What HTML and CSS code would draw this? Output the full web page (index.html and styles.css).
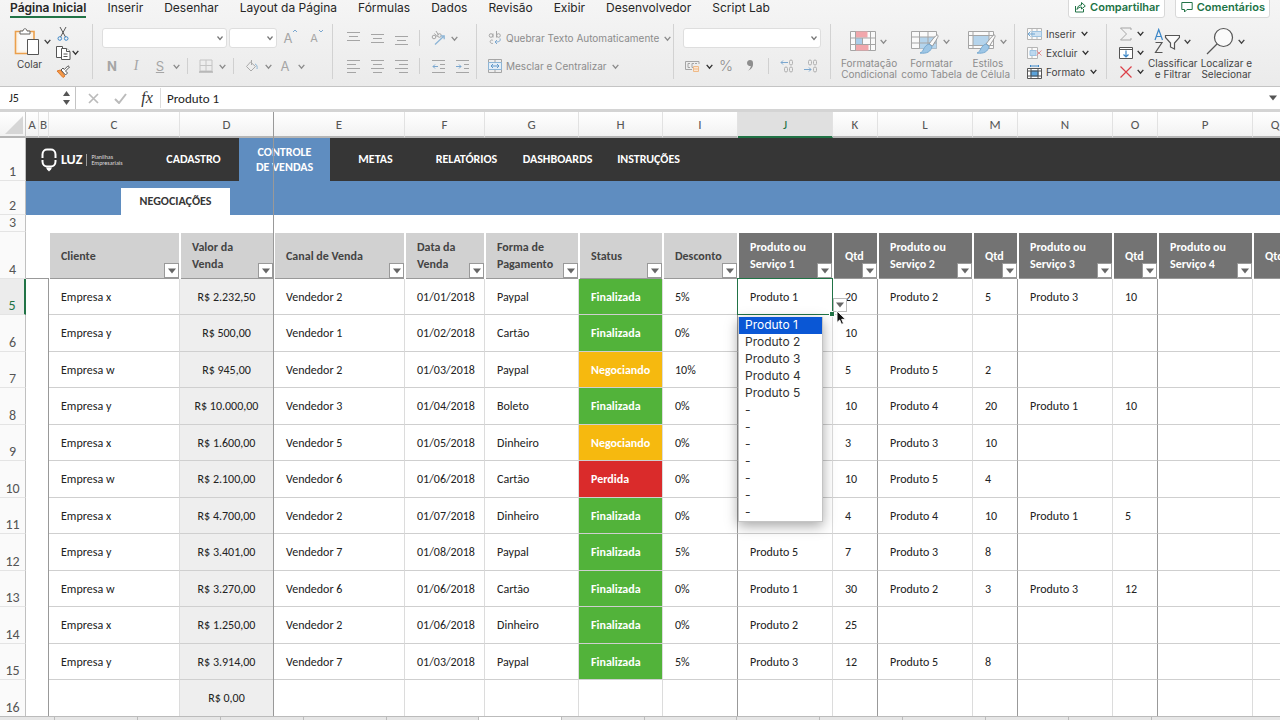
FILE: index.html
```html
<!DOCTYPE html>
<html lang="pt-BR">
<head>
<meta charset="utf-8">
<title>Controle de Vendas</title>
<link rel="stylesheet" href="styles.css">
</head>
<body>
<svg class="defs" aria-hidden="true">
  <symbol id="chev" viewBox="0 0 8 8"><path d="M1.500 2.500 4 5.500 6.500 2.500" fill="none" stroke="currentColor" stroke-width="1.200"/></symbol>
  <symbol id="tri" viewBox="0 0 8 8"><path d="M0 1.500h8L4 6.500z" fill="currentColor"/></symbol>
</svg>

<header class="ribbon">
  <div class="tabbar">
    <nav class="tabs">
      <a href="#" class="tab active">Página Inicial</a>
      <a href="#" class="tab">Inserir</a>
      <a href="#" class="tab">Desenhar</a>
      <a href="#" class="tab">Layout da Página</a>
      <a href="#" class="tab">Fórmulas</a>
      <a href="#" class="tab">Dados</a>
      <a href="#" class="tab">Revisão</a>
      <a href="#" class="tab">Exibir</a>
      <a href="#" class="tab">Desenvolvedor</a>
      <a href="#" class="tab">Script Lab</a>
    </nav>
    <div class="share">
      <button class="share-btn"><svg width="12" height="12" viewBox="0 0 12 12" fill="none" stroke="currentColor"><path d="M1.500 5v6h8V8M3 8.500C3.500 5.500 5 4 7.500 4V1.500L11.300 5 7.500 8V6C5.500 6 4 6.800 3 8.500z"/></svg>Compartilhar</button>
      <button class="share-btn"><svg width="12" height="12" viewBox="0 0 12 12" fill="none" stroke="currentColor"><path d="M.8 1.500h10.400v7H6L3.500 11V8.500H.8z"/></svg>Comentários</button>
    </div>
  </div>

  <div class="groups">
    <section class="group g-clip">
      <button class="big">
        <span class="big-icon"><svg width="26" height="28" viewBox="0 0 26 28" fill="none"><path d="M1.500 3.500h18.500v22H1.500z" fill="#fbf3e8" stroke="#eba04c" stroke-width="1.600"/><path d="M4.500 6.500h12v16h-12z" fill="#fafafa"/><path d="M6 6V3h3c0-3 4-3 4 0h3v3z" fill="#fff" stroke="#666"/><path d="M13.500 11.500h11v15h-11z" fill="#fff" stroke="#555"/></svg><svg class="chev"><use href="#chev"/></svg></span>
        <span class="cap">Colar</span>
      </button>
      <div class="stack3 dark">
        <button class="tool"><svg width="14" height="14" viewBox="0 0 14 14" fill="none" stroke="#555"><path d="M4 0l5.500 10M10 0L4.500 10"/><circle cx="3.800" cy="11.500" r="1.800" stroke="#3c87c8"/><circle cx="10.200" cy="11.500" r="1.800" stroke="#3c87c8"/></svg></button>
        <button class="tool"><svg width="15" height="14" viewBox="0 0 15 14" fill="#fff" stroke="#555"><path d="M.5 .5h6v11h-6z"/><path d="M5.500 2.500h5l3.500 3v8H5.500z"/><path d="M10.500 2.500v3H14M7.500 8h4M7.500 10.500h4"/></svg><svg class="chev"><use href="#chev"/></svg></button>
        <button class="tool"><svg width="15" height="14" viewBox="0 0 15 14" fill="none"><path d="M1 6l6 6.500L9 11 4.500 5z" fill="#f39a4a" stroke="#e0782a"/><path d="M5 5l4.500 5 2-2L9.500 6 13.500 2 12 .8 8.300 4.500 7 3z" fill="#fff" stroke="#555"/></svg></button>
      </div>
    </section>

    <section class="group g-font">
      <div class="row">
        <select class="box w-font" aria-label="Fonte"></select>
        <select class="box w-size" aria-label="Tamanho da fonte"></select>
        <button class="tool b"><span class="glyph">A</span><svg class="sup" viewBox="0 0 6 6"><path d="M1 4l2-2 2 2" fill="none" stroke="#7ba7cf"/></svg></button>
        <button class="tool b"><span class="glyph small">A</span><svg class="sup" viewBox="0 0 6 6"><path d="M1 2l2 2 2-2" fill="none" stroke="#7ba7cf"/></svg></button>
      </div>
      <div class="row tight">
        <button class="tool b"><b class="glyph">N</b></button>
        <button class="tool b"><i class="glyph serif">I</i></button>
        <button class="tool b"><u class="glyph">S</u></button>
        <svg class="chev"><use href="#chev"/></svg><span class="sep"></span>
        <button class="tool b"><svg width="14" height="14" viewBox="0 0 14 14" fill="none" stroke="#c4c4c4"><path d="M1 1h12v11H1zM7 1v11M1 6.500h12"/><path d="M0 13h14" stroke="#999"/></svg></button>
        <svg class="chev"><use href="#chev"/></svg><span class="sep"></span>
        <button class="tool b"><svg width="14" height="12" viewBox="0 0 14 12" fill="none" stroke="#aaa"><path d="M5.500 2l5 4.500L6 11 1.500 6.500zM6.500 0v5"/><path d="M10 4c2 .5 2.500 3 2 5" stroke="#8fb4d3"/></svg></button>
        <svg class="chev"><use href="#chev"/></svg>
        <button class="tool b"><span class="glyph">A</span></button>
        <svg class="chev"><use href="#chev"/></svg>
      </div>
    </section>

    <section class="group g-align">
      <div class="row tight">
        <button class="tool b"><svg width="13" height="14" viewBox="0 0 13 14" stroke="#a5a5a5"><path d="M0 1.500h13M2 5.500h9M0 9.500h13"/></svg></button>
        <button class="tool b"><svg width="13" height="14" viewBox="0 0 13 14" stroke="#a5a5a5"><path d="M0 3.500h13M2 7.500h9M0 11.500h13"/></svg></button>
        <button class="tool b"><svg width="13" height="14" viewBox="0 0 13 14" stroke="#a5a5a5"><path d="M0 5.500h13M2 9.500h9M0 13.500h13"/></svg></button>
        <span class="sep"></span>
        <button class="tool b"><svg width="15" height="15" viewBox="0 0 15 15" fill="none" stroke="#a5a5a5"><circle cx="3" cy="6" r="1.800"/><path d="M3.500 2.500l3 3.500"/><circle cx="8.500" cy="4.500" r="1.800"/><path d="M5 0l2.500 4"/><path d="M4 13.500L13 5M9.500 4.800l3.700 0v3.500" stroke="#8db5d6" stroke-width="1.300"/></svg></button>
        <svg class="chev"><use href="#chev"/></svg>
      </div>
      <div class="row tight">
        <button class="tool b"><svg width="13" height="13" viewBox="0 0 13 13" stroke="#a5a5a5"><path d="M0 .5h13M0 4.500h9M0 8.500h13M0 12.500h9"/></svg></button>
        <button class="tool b"><svg width="13" height="13" viewBox="0 0 13 13" stroke="#a5a5a5"><path d="M0 .5h13M2 4.500h9M0 8.500h13M2 12.500h9"/></svg></button>
        <button class="tool b"><svg width="13" height="13" viewBox="0 0 13 13" stroke="#a5a5a5"><path d="M0 .5h13M4 4.500h9M0 8.500h13M4 12.500h9"/></svg></button>
        <span class="sep"></span>
        <button class="tool b"><svg width="13" height="13" viewBox="0 0 13 13" fill="none" stroke="#a5a5a5"><path d="M0 .5h13M8 4.500h5M8 8.500h5M0 12.500h13"/><path d="M6 6.500H1M3 4.500l-2 2 2 2" stroke="#7ba7cf"/></svg></button>
        <button class="tool b"><svg width="13" height="13" viewBox="0 0 13 13" fill="none" stroke="#a5a5a5"><path d="M0 .5h13M8 4.500h5M8 8.500h5M0 12.500h13"/><path d="M0 6.500h5M3 4.500l2 2-2 2" stroke="#7ba7cf"/></svg></button>
      </div>
    </section>

    <section class="group g-wrap">
      <div class="row"><button class="tool text"><svg width="14" height="14" viewBox="0 0 14 14" fill="none" stroke="#a5a5a5"><circle cx="3" cy="4.500" r="1.800"/><path d="M5 2.500v4M8.500 0v6.500M4.800 9.300c-3-1.500-4 3.500 0 3.200"/><circle cx="10.500" cy="4.500" r="1.800"/><path d="M12 7.500c1 3-1.500 3.500-5 3.500M9 9l-2 2 2 2" stroke="#7ba7cf"/></svg>Quebrar Texto Automaticamente<svg class="chev"><use href="#chev"/></svg></button></div>
      <div class="row"><button class="tool text"><svg width="14" height="14" viewBox="0 0 14 14" fill="none" stroke="#a5a5a5"><path d="M.5 .5h13v13H.5zM7 .5v3M7 10.500v3"/><path d="M.5 3.500h13v7H.5z" fill="#e4eef7" stroke="#8db5d6"/><path d="M3 7h8M5 5L3 7l2 2M9 5l2 2-2 2" stroke="#5f97c9"/></svg>Mesclar e Centralizar<svg class="chev"><use href="#chev"/></svg></button></div>
    </section>

    <section class="group g-number">
      <div class="row"><select class="box w-num" aria-label="Formato de número"></select></div>
      <div class="row tight">
        <button class="tool b"><svg width="16" height="13" viewBox="0 0 16 13" fill="none" stroke="#a5a5a5"><path d="M14 4V1.500H.5v8H7M5 3.500H3v4h2M9 3.500H7v4h1M10 3.500h2"/><path d="M8.500 6.500h5v5h-5zM8.500 9h5" fill="#fbe6d3" stroke="#efba88"/></svg></button>
        <svg class="chev strong"><use href="#chev"/></svg>
        <button class="tool b"><span class="glyph pct">%</span></button>
        <button class="tool b"><svg width="8" height="12" viewBox="0 0 8 12"><path d="M4 0a3 3 0 1 0 .8 5.900C4.500 8 3.500 9.500 1.500 11c4-1.500 6-4.500 5.500-8A3 3 0 0 0 4 0z" fill="#8e8e8e"/></svg></button>
        <span class="sep"></span>
        <button class="tool b"><svg width="14" height="14" viewBox="0 0 14 14" fill="none" stroke="#b0b0b0"><rect x="9.500" y="1" width="3" height="5" rx="1.500"/><rect x="4.500" y="8" width="3" height="5" rx="1.500"/><rect x="9.500" y="8" width="3" height="5" rx="1.500"/><path d="M8 3.500H1M3 1.500l-2 2 2 2" stroke="#7ba7cf"/></svg></button>
        <button class="tool b"><svg width="14" height="14" viewBox="0 0 14 14" fill="none" stroke="#b0b0b0"><rect x="4.500" y="1" width="3" height="5" rx="1.500"/><rect x="9.500" y="1" width="3" height="5" rx="1.500"/><rect x="9.500" y="8" width="3" height="5" rx="1.500"/><path d="M0 10.500h7M5 8.500l2 2-2 2" stroke="#7ba7cf"/></svg></button>
      </div>
    </section>

    <section class="group g-style">
      <button class="big dim">
        <span class="big-icon"><svg width="26" height="26" viewBox="0 0 26 26"><path d="M.5 3.500h25v19H.5z" fill="#fafafa" stroke="#a5a5a5"/><path d="M5.500 3.500h12v6h-12zM5.500 16.500h13v6h-13z" fill="#f1a7ac"/><path d="M5.500 10h7v6h-7z" fill="#a9cdea"/><path d="M5.500 3.500v19M.5 10h25M.5 16.500h25M12.500 10v6.500M20.500 3.500v19" fill="none" stroke="#a5a5a5"/></svg><svg class="chev"><use href="#chev"/></svg></span>
        <span>Formatação<br>Condicional</span>
      </button>
      <button class="big dim">
        <span class="big-icon"><svg width="28" height="26" viewBox="0 0 28 26"><path d="M.5 3.500h25v17H.5z" fill="#fafafa" stroke="#a5a5a5"/><path d="M8.500 9h17v11.500h-17z" fill="#b5d4ec"/><path d="M.5 9h25M.5 15h25M8.500 3.500v17M17 3.500v17" fill="none" stroke="#a5a5a5"/><path d="M26.500 7c1.500 1 .5 2-5 11l-3.500-2C23 9.500 25.500 6.500 26.500 7z" fill="#fafafa" stroke="#999"/><path d="M18 16l3 2.500c-1 5-5 7.500-12 6.500 4-1 3-7 9-9z" fill="#9dc6e6" stroke="#77a9d0"/></svg><svg class="chev"><use href="#chev"/></svg></span>
        <span>Formatar<br>como Tabela</span>
      </button>
      <button class="big dim">
        <span class="big-icon"><svg width="28" height="26" viewBox="0 0 28 26"><path d="M.5 3.500h25v17H.5z" fill="#fafafa" stroke="#a5a5a5"/><path d="M5 7.500h16v10H5z" fill="#b5d4ec"/><path d="M.5 7.500h25M.5 17.500h25M5 3.500v17M21 3.500v17" fill="none" stroke="#a5a5a5"/><path d="M26.500 7c1.500 1 .5 2-5 11l-3.500-2C23 9.500 25.500 6.500 26.500 7z" fill="#fafafa" stroke="#999"/><path d="M18 16l3 2.500c-1 5-5 7.500-12 6.500 4-1 3-7 9-9z" fill="#9dc6e6" stroke="#77a9d0"/></svg><svg class="chev"><use href="#chev"/></svg></span>
        <span>Estilos<br>de Célula</span>
      </button>
    </section>

    <section class="group g-cells">
      <div class="stack3 dark">
        <button class="tool text"><svg width="15" height="12" viewBox="0 0 15 12" fill="#fafafa" stroke="#b5b5b5"><path d="M.5 .5h14v11H.5zM5 .5v11M10 .5v11"/><path d="M5 3.500h9.500v5H5z" fill="#cfe2f2" stroke="#9dc2e0"/><path d="M8 6H1M3.500 3.500L1 6l2.500 2.500" fill="none" stroke="#6fa5d2"/></svg>Inserir<svg class="chev"><use href="#chev"/></svg></button>
        <button class="tool text"><svg width="15" height="12" viewBox="0 0 15 12" fill="#fafafa" stroke="#b5b5b5"><path d="M.5 .5h10v11H.5zM5 .5v11"/><path d="M3 3.500h6v5H3z" fill="#bcd7ee" stroke="#9dc2e0"/><path d="M9.500 3.500l5 5M14.500 3.500l-5 5" stroke="#e58d92"/></svg>Excluir<svg class="chev"><use href="#chev"/></svg></button>
        <button class="tool text"><svg width="15" height="14" viewBox="0 0 15 14" fill="#fff" stroke="#555"><path d="M.5 3.500h14v10H.5z"/><path d="M4 6h7v5H4z" fill="#5ba3db" stroke="#3c87c8"/><path d="M4 3v11M11 3v11M.5 6h14M.5 11h14" fill="none"/><path d="M3 1h9M3.500 0v2M11.500 0v2" stroke="#3c87c8"/></svg>Formato<svg class="chev"><use href="#chev"/></svg></button>
      </div>
    </section>

    <section class="group g-edit">
      <div class="stack3 dark">
        <button class="tool"><svg width="14" height="14" viewBox="0 0 14 14" fill="none" stroke="#a5a5a5"><path d="M12 3V1H1.500l6 6-6 6H12v-2"/></svg><svg class="chev"><use href="#chev"/></svg></button>
        <button class="tool"><svg width="14" height="12" viewBox="0 0 14 12" fill="#fff" stroke="#555"><path d="M.5 .5h13v11H.5zM.5 2.500h13"/><path d="M7 3.500V10M4.500 7.500L7 10l2.500-2.500" fill="none" stroke="#3c87c8" stroke-width="1.200"/></svg><svg class="chev"><use href="#chev"/></svg></button>
        <button class="tool"><svg width="14" height="12" viewBox="0 0 14 12" fill="none" stroke="#dc3f48" stroke-width="1.200"><path d="M1.500 .5l11 11M12.500 .5l-11 11"/></svg><svg class="chev"><use href="#chev"/></svg></button>
      </div>
      <button class="big">
        <span class="big-icon"><svg width="26" height="26" viewBox="0 0 26 26" fill="none" stroke="#555" stroke-width="1.200"><path d="M1 12L4.700 1.500 8.500 12M2.300 8.500h5" stroke="#3c87c8"/><path d="M1.500 14.500h6.500L1.500 24.500H8.500"/><path d="M11.500 7.500h14v2l-5 5.500v6l-4-2v-4l-5-5.500z" fill="#fafafa"/></svg><svg class="chev"><use href="#chev"/></svg></span>
        <span>Classificar<br>e Filtrar</span>
      </button>
      <button class="big">
        <span class="big-icon"><svg width="28" height="28" viewBox="0 0 28 28" fill="none" stroke="#555" stroke-width="1.200"><circle cx="17.500" cy="10.500" r="9" fill="#fafafa"/><path d="M11 17L1 27"/></svg><svg class="chev"><use href="#chev"/></svg></span>
        <span>Localizar e<br>Selecionar</span>
      </button>
    </section>
  </div>
</header>

<div class="formula">
  <div class="namebox">
    <input value="J5" aria-label="Caixa de nome">
    <span class="spin"><svg width="7" height="5" viewBox="0 0 7 5"><path d="M0 5h7L3.500 0z" fill="#555"/></svg><svg width="7" height="5" viewBox="0 0 7 5"><path d="M0 0h7L3.500 5z" fill="#555"/></svg></span>
  </div>
  <button class="fbtn" aria-label="Cancelar"><svg width="11" height="11" viewBox="0 0 11 11" stroke="#bbb" stroke-width="1.700"><path d="M1 1l9 9M10 1l-9 9"/></svg></button>
  <button class="fbtn" aria-label="Confirmar"><svg width="13" height="11" viewBox="0 0 13 11" fill="none" stroke="#bbb" stroke-width="2"><path d="M1 6l4 4 7-9"/></svg></button>
  <button class="fbtn fx">fx</button>
  <input class="finput" value="Produto 1" aria-label="Barra de fórmulas">
  <button class="fexp" aria-label="Expandir"><svg width="8" height="8"><use href="#tri"/></svg></button>
</div>

<main class="sheet">
<table class="grid">
<colgroup><col class="c-row"><col class="c-a"><col class="c-b"><col class="c-c"><col class="c-d"><col class="c-e"><col class="c-f"><col class="c-g"><col class="c-h"><col class="c-i"><col class="c-p"><col class="c-q"><col class="c-p"><col class="c-q"><col class="c-p"><col class="c-q"><col class="c-p"><col class="c-q"></colgroup>
<thead>
<tr class="letters"><th class="corner"><svg width="18" height="18" viewBox="0 0 18 18"><path d="M18 0v18H0z" fill="#d6d6d6"/></svg></th><th>A</th><th>B</th><th>C</th><th>D</th><th>E</th><th>F</th><th>G</th><th>H</th><th>I</th><th class="on">J</th><th>K</th><th>L</th><th>M</th><th>N</th><th>O</th><th>P</th><th>Q</th></tr>
</thead>
<tbody>
<tr class="r1"><th>1</th><td colspan="17" class="menu-cell">
  <nav class="menu">
    <a href="#" class="logo"><svg width="16" height="24" viewBox="0 0 16 24" fill="none" stroke="#fff" stroke-width="2"><path d="M1.500 10V6.500C1.500 3 4 1.500 6 1.500h4c2 0 4.500 1.500 4.500 5V10M1.500 12v1.500c0 3.500 2.500 5 4.500 5h4c2 0 4.500-1.500 4.500-5V12"/><path d="M5 19.500h6l-1 2-2 2-2-2z" fill="#fff" stroke="none"/></svg><span class="brand">LUZ</span><span class="tag">Planilhas<br>Empresariais</span></a>
    <a href="#">CADASTRO</a><a href="#" class="current">CONTROLE<br>DE VENDAS</a><a href="#">METAS</a><a href="#">RELATÓRIOS</a><a href="#">DASHBOARDS</a><a href="#">INSTRUÇÕES</a>
  </nav></td></tr>
<tr class="r2"><th>2</th><td colspan="17" class="sub-cell"><nav class="sub"><a href="#">NEGOCIAÇÕES</a></nav></td></tr>
<tr class="r3"><th>3</th><td colspan="17" class="none"></td></tr>
<tr class="r4"><th>4</th><td class="none"></td><td class="none"></td>
<td>Cliente<button class="filter" aria-label="Filtrar Cliente"><svg width="8" height="8"><use href="#tri"/></svg></button></td>
<td>Valor da<br>Venda<button class="filter" aria-label="Filtrar Valor"><svg width="8" height="8"><use href="#tri"/></svg></button></td>
<td>Canal de Venda<button class="filter" aria-label="Filtrar Canal"><svg width="8" height="8"><use href="#tri"/></svg></button></td>
<td>Data da<br>Venda<button class="filter" aria-label="Filtrar Data"><svg width="8" height="8"><use href="#tri"/></svg></button></td>
<td>Forma de<br>Pagamento<button class="filter" aria-label="Filtrar Forma"><svg width="8" height="8"><use href="#tri"/></svg></button></td>
<td>Status<button class="filter" aria-label="Filtrar Status"><svg width="8" height="8"><use href="#tri"/></svg></button></td>
<td>Desconto<button class="filter" aria-label="Filtrar Desconto"><svg width="8" height="8"><use href="#tri"/></svg></button></td>
<td class="dk">Produto ou<br>Serviço 1<button class="filter" aria-label="Filtrar Produto 1"><svg width="8" height="8"><use href="#tri"/></svg></button></td>
<td class="dk">Qtd<button class="filter" aria-label="Filtrar Qtd 1"><svg width="8" height="8"><use href="#tri"/></svg></button></td>
<td class="dk">Produto ou<br>Serviço 2<button class="filter" aria-label="Filtrar Produto 2"><svg width="8" height="8"><use href="#tri"/></svg></button></td>
<td class="dk">Qtd<button class="filter" aria-label="Filtrar Qtd 2"><svg width="8" height="8"><use href="#tri"/></svg></button></td>
<td class="dk">Produto ou<br>Serviço 3<button class="filter" aria-label="Filtrar Produto 3"><svg width="8" height="8"><use href="#tri"/></svg></button></td>
<td class="dk">Qtd<button class="filter" aria-label="Filtrar Qtd 3"><svg width="8" height="8"><use href="#tri"/></svg></button></td>
<td class="dk">Produto ou<br>Serviço 4<button class="filter" aria-label="Filtrar Produto 4"><svg width="8" height="8"><use href="#tri"/></svg></button></td>
<td class="dk">Qtd</td></tr>
</tbody>
<tbody class="data">
<tr><th class="on">5</th><td></td><td></td><td>Empresa x</td><td>R$ 2.232,50</td><td>Vendedor 2</td><td>01/01/2018</td><td>Paypal</td><td class="ok">Finalizada</td><td>5%</td>
<td class="selected">Produto 1<span class="outline"></span>
  <select class="list" size="12" aria-label="Produto ou Serviço 1"><option selected>Produto 1</option><option>Produto 2</option><option>Produto 3</option><option>Produto 4</option><option>Produto 5</option><option>-</option><option>-</option><option>-</option><option>-</option><option>-</option><option>-</option><option>-</option></select>
  <button class="open" aria-label="Abrir lista"><svg width="8" height="8"><use href="#tri"/></svg></button>
  <svg class="cursor" width="11" height="16" viewBox="0 0 11 16"><path d="M1 1v11.500l2.700-2.500 1.800 4.300 2-.8-1.800-4.200H9.500z" fill="#111" stroke="#fff" stroke-width=".9"/></svg>
</td><td>20</td><td>Produto 2</td><td>5</td><td>Produto 3</td><td>10</td><td></td><td></td></tr>
<tr><th>6</th><td></td><td></td><td>Empresa y</td><td>R$ 500,00</td><td>Vendedor 1</td><td>01/02/2018</td><td>Cartão</td><td class="ok">Finalizada</td><td>0%</td><td></td><td>10</td><td></td><td></td><td></td><td></td><td></td><td></td></tr>
<tr><th>7</th><td></td><td></td><td>Empresa w</td><td>R$ 945,00</td><td>Vendedor 2</td><td>01/03/2018</td><td>Paypal</td><td class="neg">Negociando</td><td>10%</td><td></td><td>5</td><td>Produto 5</td><td>2</td><td></td><td></td><td></td><td></td></tr>
<tr><th>8</th><td></td><td></td><td>Empresa y</td><td>R$ 10.000,00</td><td>Vendedor 3</td><td>01/04/2018</td><td>Boleto</td><td class="ok">Finalizada</td><td>0%</td><td></td><td>10</td><td>Produto 4</td><td>20</td><td>Produto 1</td><td>10</td><td></td><td></td></tr>
<tr><th>9</th><td></td><td></td><td>Empresa x</td><td>R$ 1.600,00</td><td>Vendedor 5</td><td>01/05/2018</td><td>Dinheiro</td><td class="neg">Negociando</td><td>0%</td><td></td><td>3</td><td>Produto 3</td><td>10</td><td></td><td></td><td></td><td></td></tr>
<tr><th>10</th><td></td><td></td><td>Empresa w</td><td>R$ 2.100,00</td><td>Vendedor 6</td><td>01/06/2018</td><td>Cartão</td><td class="lost">Perdida</td><td>0%</td><td></td><td>10</td><td>Produto 5</td><td>4</td><td></td><td></td><td></td><td></td></tr>
<tr><th>11</th><td></td><td></td><td>Empresa x</td><td>R$ 4.700,00</td><td>Vendedor 2</td><td>01/07/2018</td><td>Dinheiro</td><td class="ok">Finalizada</td><td>0%</td><td></td><td>4</td><td>Produto 4</td><td>10</td><td>Produto 1</td><td>5</td><td></td><td></td></tr>
<tr><th>12</th><td></td><td></td><td>Empresa y</td><td>R$ 3.401,00</td><td>Vendedor 7</td><td>01/08/2018</td><td>Paypal</td><td class="ok">Finalizada</td><td>5%</td><td>Produto 5</td><td>7</td><td>Produto 3</td><td>8</td><td></td><td></td><td></td><td></td></tr>
<tr><th>13</th><td></td><td></td><td>Empresa w</td><td>R$ 3.270,00</td><td>Vendedor 6</td><td>01/06/2018</td><td>Cartão</td><td class="ok">Finalizada</td><td>0%</td><td>Produto 1</td><td>30</td><td>Produto 2</td><td>3</td><td>Produto 3</td><td>12</td><td></td><td></td></tr>
<tr><th>14</th><td></td><td></td><td>Empresa x</td><td>R$ 1.250,00</td><td>Vendedor 2</td><td>01/06/2018</td><td>Dinheiro</td><td class="ok">Finalizada</td><td>0%</td><td>Produto 2</td><td>25</td><td></td><td></td><td></td><td></td><td></td><td></td></tr>
<tr><th>15</th><td></td><td></td><td>Empresa y</td><td>R$ 3.914,00</td><td>Vendedor 7</td><td>01/03/2018</td><td>Paypal</td><td class="ok">Finalizada</td><td>5%</td><td>Produto 3</td><td>12</td><td>Produto 5</td><td>8</td><td></td><td></td><td></td><td></td></tr>
<tr><th>16</th><td></td><td></td><td></td><td>R$ 0,00</td><td></td><td></td><td></td><td></td><td></td><td></td><td></td><td></td><td></td><td></td><td></td><td></td><td></td></tr>
</tbody>
</table>
<span class="freeze"></span>
</main>
<footer class="sheets"><span></span><span></span><span></span><span></span><span class="wide"></span><span class="cur"></span><span></span><span class="wide"></span><span></span><span></span><span></span><span></span><span></span><span></span></footer>
</body>
</html>
```
FILE: styles.css
```css
* { box-sizing: border-box; }
html, body { height: 100%; }
body {
  margin: 0;
  display: flex;
  flex-direction: column;
  overflow: hidden;
  font-family: Carlito, Lato, sans-serif;
  font-size: 12px;
  color: #222;
  background: #fff;
}
a { color: inherit; text-decoration: none; }
button, select, input { font: inherit; color: inherit; margin: 0; padding: 0; border: 0; background: none; border-radius: 0; }
svg { flex: none; display: block; }
.defs { position: absolute; width: 0; height: 0; }

/* Ribbon */
.ribbon {
  flex: none;
  font-family: Inter, sans-serif;
  font-size: 10px;
  background: linear-gradient(#f5f5f5, #ebebeb);
  border-bottom: 1px solid #c4c4c4;
}
.tabbar { display: flex; justify-content: space-between; height: 20px; padding: 0 10px; }
.tabs { display: flex; gap: 21px; font-size: 12px; line-height: 15px; color: #262626; white-space: nowrap; }
.tab { height: 18px; }
.tab.active { font-weight: 600; border-bottom: 2px solid #217346; }
.share { display: flex; gap: 10px; align-items: flex-end; height: 18px; }
.share-btn {
  display: flex; align-items: center; gap: 4px;
  height: 22px; padding: 0 4px 0 5px;
  font-size: 11px; font-weight: 600; color: #217346;
  background: #fff; border: 1px solid #d8d8d8; border-radius: 3px;
}
.groups { display: flex; height: 66px; padding: 4px 0 7px; }
.group { flex: none; border-right: 1px solid #d2d2d2; color: #8c8c8c; white-space: nowrap; }
.group:last-child { border: 0; }
.chev { width: 9px; height: 9px; }
.strong, .dark .chev { color: #333; }
.row { display: flex; align-items: center; gap: 2px; height: 28px; }
.tight { gap: 0; margin-left: -2px; }
.sep { width: 1px; height: 16px; margin: 0 6px; background: #d0d0d0; }
.tool { display: flex; align-items: center; }
.b { width: 24px; height: 20px; justify-content: center; }
.text { gap: 4px; }
.glyph { font-size: 13px; color: #a5a5a5; line-height: 16px; }
.small { font-size: 11px; }
.serif { font-family: "Liberation Serif", serif; font-size: 14px; }
.pct { font-size: 15px; font-weight: 300; color: #8e8e8e; }
.sup { width: 6px; height: 6px; align-self: flex-start; }
.box {
  appearance: none; height: 20px; border-radius: 3px; border: 1px solid #dedede;
  background: #fff url("data:image/svg+xml,%3Csvg xmlns='http://www.w3.org/2000/svg' width='8' height='8'%3E%3Cpath d='M1.500 2.500 4 5.500 6.500 2.500' fill='none' stroke='%23777' stroke-width='1.200'/%3E%3C/svg%3E") no-repeat right 2px center;
}
.w-font { width: 125px; }
.w-size { width: 48px; }
.w-num { width: 138px; }
.stack3 { display: grid; grid-template-rows: repeat(3, 19px); align-items: center; }
.dark, .big { color: #444; }
.big { display: flex; flex-direction: column; align-items: center; justify-content: flex-start; height: 56px; line-height: 11px; }
.big.dim { color: #8c8c8c; }
.big-icon { display: flex; align-items: center; gap: 3px; height: 35px; }
.g-clip { display: flex; width: 93px; padding-left: 14px; gap: 4px; }
.g-clip .big { align-items: flex-start; }
.cap { padding-left: 3px; }
.g-font { width: 240px; padding-left: 9px; }
.g-align { width: 144px; padding-left: 10px; }
.g-wrap { width: 197px; padding-left: 11px; }
.g-number { width: 157px; padding-left: 9px; }
.g-style { display: flex; gap: 4px; width: 184px; padding-left: 10px; }
.g-cells { width: 92px; padding-left: 12px; }
.g-edit { display: flex; gap: 3px; flex: 1; padding-left: 12px; }
.g-edit .tool { gap: 3px; }

/* Formula bar */
.formula { flex: none; display: flex; align-items: center; height: 25px; background: #fff; border-bottom: 3px solid #d4d4d4; }
.namebox { display: flex; align-items: center; width: 76px; height: 22px; padding: 0 5px 0 9px; border-right: 1px solid #c4c4c4; }
.namebox input { width: 54px; flex: 1; min-width: 0; }
.spin { display: flex; flex-direction: column; gap: 4px; }
.fbtn { display: flex; align-items: center; justify-content: center; width: 27px; height: 20px; }
.namebox + .fbtn { margin-left: 4px; }
.fx { font-family: "Liberation Serif", serif; font-style: italic; font-size: 16px; color: #333; border-right: 1px solid #ddd; }
.finput { flex: 1; padding-left: 6px; font-size: 13px; }
.fexp { width: 11px; color: #555; }

/* Sheet */
.sheet { position: relative; flex: 1; min-height: 0; overflow: hidden; }
.grid { table-layout: fixed; width: 1296px; border-collapse: separate; border-spacing: 0; }
.c-row { width: 26px; } .c-a { width: 13px; } .c-b { width: 10px; }
.c-c { width: 131px; } .c-d { width: 94px; } .c-e { width: 131px; }
.c-f { width: 80px; } .c-g { width: 94px; } .c-h { width: 84px; }
.c-i { width: 75px; } .c-p { width: 95px; } .c-q { width: 45px; }
th { font-weight: 400; color: #555; padding: 0; }
td { padding: 0; white-space: nowrap; }
.letters { height: 26px; font-size: 13px; }
.letters th { background: linear-gradient(#fff, #f2f2f2); border-right: 1px solid #e2e2e2; border-bottom: 2px solid #b5b5b5; }
.letters .on { background: #e0e0e0; color: #217346; border-bottom-color: #217346; }
.letters .corner { border-right-color: #c8c8c8; }
.corner svg { margin: 2px 0 0 5px; }
tbody th { vertical-align: bottom; font-size: 14px; line-height: 16px; background: #fafafa; border-right: 1px solid #c0c0c0; border-bottom: 1px solid #e4e4e4; }
.r1 { height: 43px; }
.r2 { height: 34px; }
.r3 { height: 17px; }
.r4 { height: 47px; }
.data tr { height: 36px; }
.data tr:nth-child(even) { height: 37px; }
.menu-cell { background: #363636; }
.menu { display: flex; height: 43px; color: #fff; font-weight: 700; line-height: 15px; text-align: center; }
.menu a { display: flex; align-items: center; justify-content: center; width: 91px; }
.menu .current { background: #5f8dc0; }
.menu .logo { width: 122px; justify-content: flex-start; gap: 4px; padding-left: 15px; }
.brand { font-size: 14px; }
.tag { padding-left: 4px; border-left: 1px solid #999; font-size: 6px; line-height: 6px; font-weight: 400; text-align: left; color: #ddd; }
.sub-cell { background: #5f8dc0; vertical-align: bottom; }
.sub { display: flex; padding-left: 95px; }
.sub a { width: 109px; line-height: 27px; text-align: center; font-weight: 700; color: #363636; background: #fff; }
.r4 td { position: relative; padding-left: 11px; line-height: 17px; font-weight: 700; color: #444; background: #d1d1d1; border: solid #fff; border-width: 1px 1px 0 1px; box-shadow: inset 0 -1px #999; }
.r4 td.dk { background: #737373; color: #fff; }
.r4 td.none { background: none; border: 0; }
.filter, .open { display: flex; align-items: center; justify-content: center; position: absolute; color: #666; background: #fff; border: 1px solid #999; }
.filter { right: 0; bottom: 1px; width: 15px; height: 15px; }
.data td { padding-left: 12px; border-right: 1px solid #dcdcdc; border-bottom: 1px solid #cfcfcf; }
.data td:nth-child(2) { padding: 0; border: 0; }
.data td:nth-child(3) { padding: 0; border-width: 0 1px 0 0; }
.data td:nth-child(3), .data td:nth-child(10), .data td:nth-child(12), .data td:nth-child(14), .data td:nth-child(16) { border-right-color: #999; }
.data td:nth-child(5) { padding: 0; text-align: center; background: #eee; border-right-color: #999; }
.data .ok, .data .neg, .data .lost { font-weight: 700; color: #fff; }
.data .ok { background: #52b33a; }
.data .neg { background: #f6b90f; }
.data .lost { background: #da2b2b; }
.data th.on { color: #217346; background: #ececec; border-right: 2px solid #217346; }
.data .selected { position: relative; }
.outline { position: absolute; inset: -1px; border: 1px solid #217346; pointer-events: none; }
.outline::after { content: ""; position: absolute; right: -3px; bottom: -3px; width: 4px; height: 4px; background: #217346; border: 1px solid #fff; box-sizing: content-box; }
.open { left: 95px; bottom: 2px; width: 14px; height: 14px; z-index: 2; border-color: #bbb; }
.cursor { position: absolute; left: 98px; top: 31px; z-index: 4; }
.list {
  position: absolute; left: 0; top: 38px; z-index: 3;
  appearance: none; width: 85px; overflow: hidden;
  font-family: Inter, sans-serif; font-size: 12px;
  background: #fff; border: 1px solid #c4c4c4; border-top: 0; outline: 0;
  box-shadow: 0 4px 12px rgba(0, 0, 0, .35);
}
.list option { padding: 0 0 0 6px; min-height: 17px; line-height: 17px; color: #333; }
.list option:checked { background: #0a57d5 linear-gradient(#0a57d5, #0a57d5); color: #fff; -webkit-text-fill-color: #fff; }
.freeze { position: absolute; left: 273px; top: 0; bottom: 0; width: 1px; background: #999; }

/* Sheet tabs */
.sheets { flex: none; display: flex; height: 4px; padding-left: 54px; background: #e6e6e6; border-top: 1px solid #bbb; overflow: hidden; }
.sheets span { flex: none; width: 83px; border-left: 1px solid #bbb; }
.sheets .wide { width: 92px; }
.sheets .cur { background: #fff; }
```
